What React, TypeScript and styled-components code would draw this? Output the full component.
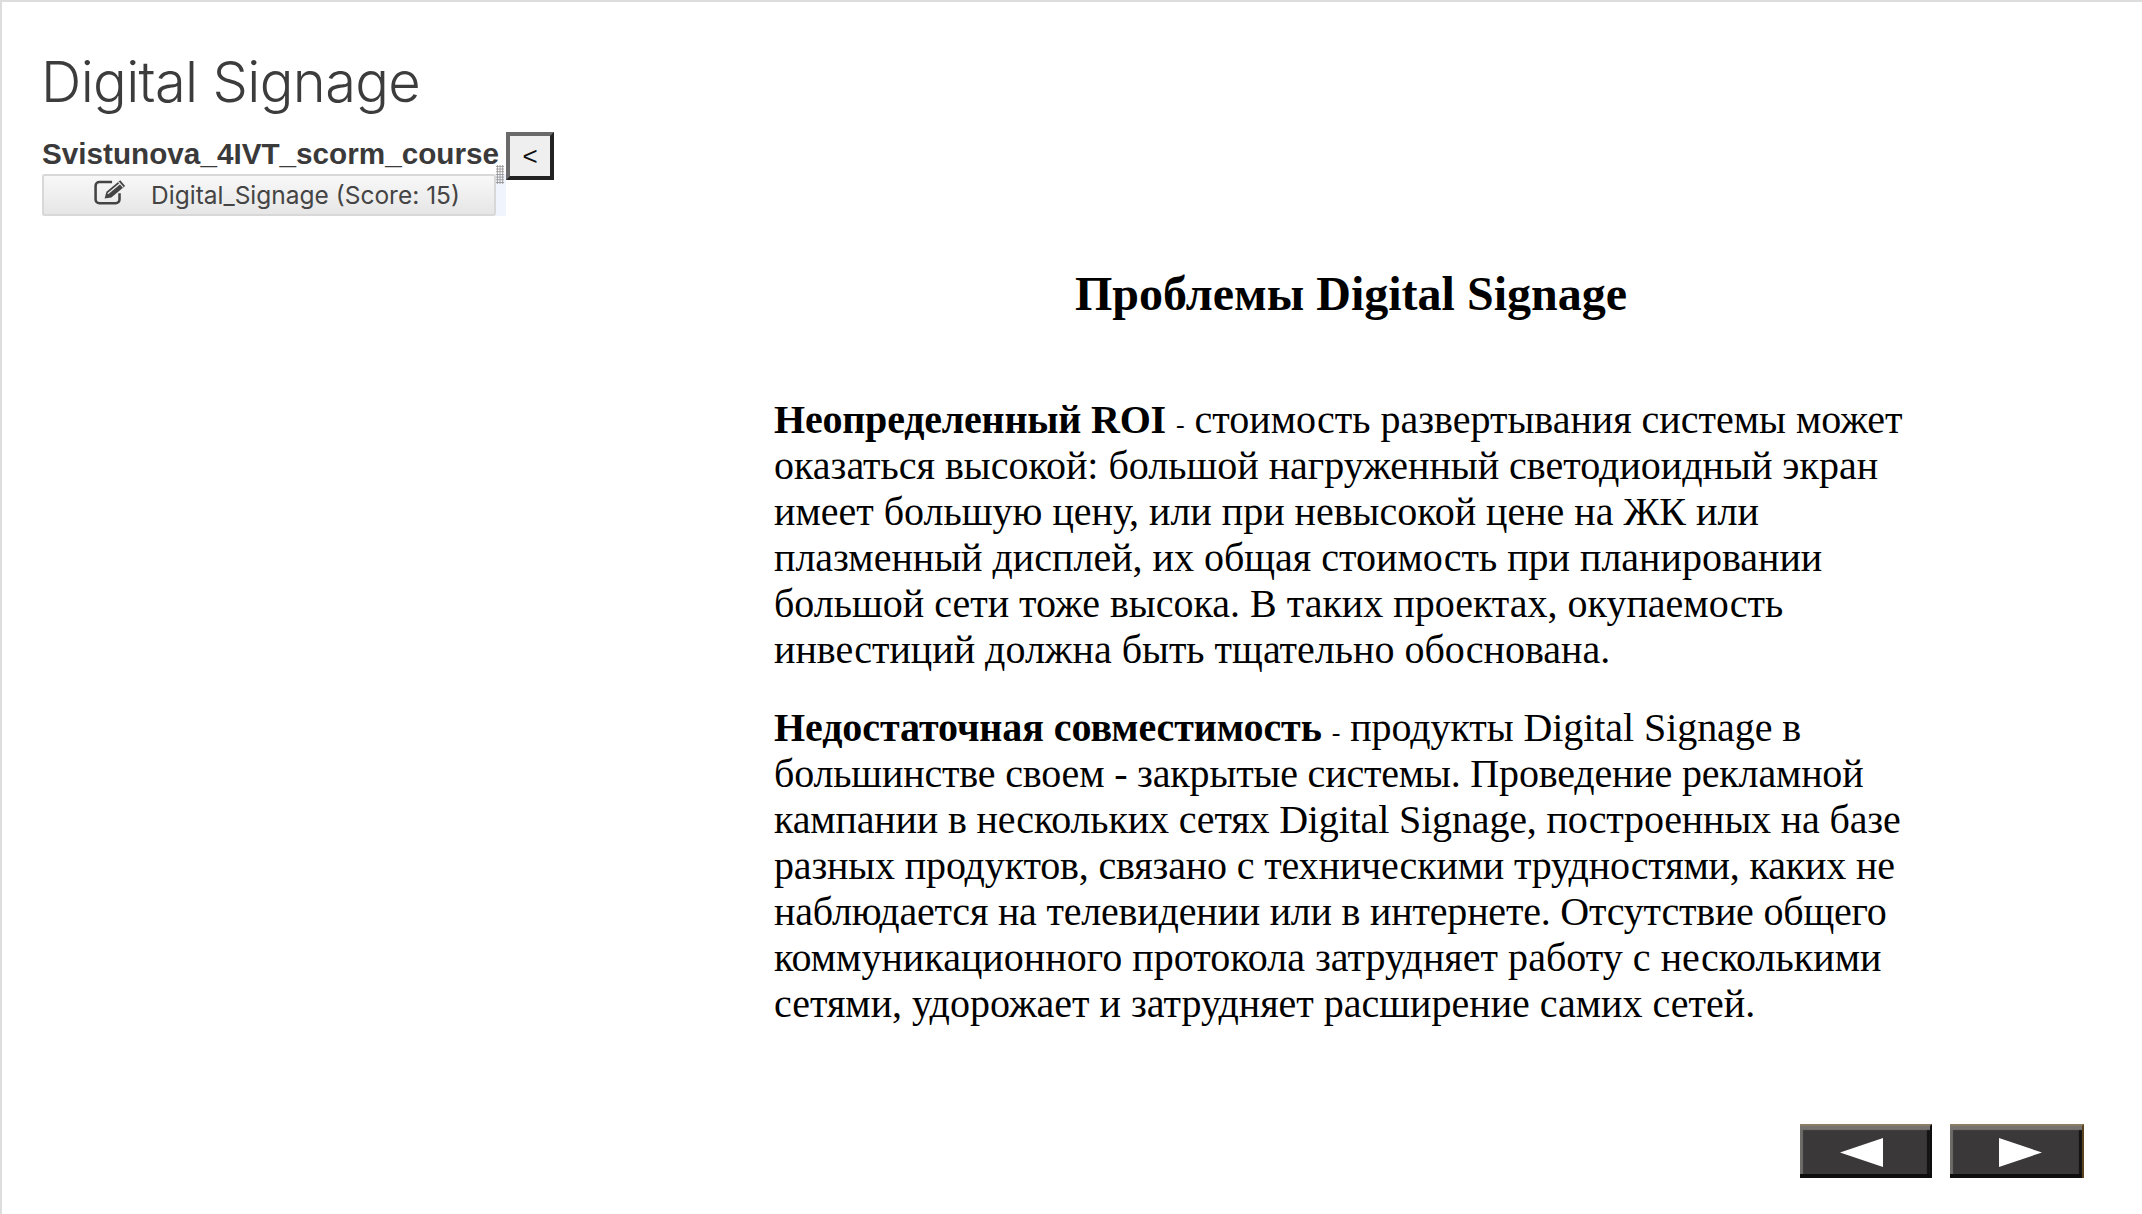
import React from "react";
import styled, { createGlobalStyle } from "styled-components";

const Global = createGlobalStyle`
  html, body { margin: 0; padding: 0; background: #fff; }
  * { box-sizing: border-box; }
`;

const Page = styled.div`
  width: 2142px;
  height: 1214px;
  overflow: hidden;
  display: flex;
  flex-direction: column;
  border-top: 2px solid #ddd;
  border-left: 2px solid #ddd;
  background: #fff;
`;

const Title = styled.h1`
  margin: 46px 0 0 39px;
  height: 68px;
  font: 300 56px/68px Inter, "Liberation Sans", sans-serif;
  letter-spacing: -0.65px;
  color: #3c3c3c;
`;

const Main = styled.div`
  flex: 1;
  display: flex;
  min-height: 0;
`;

const Sidebar = styled.aside`
  width: 512px;
  flex: none;
  padding: 16px 0 0 40px;
`;

const CourseRow = styled.div`
  display: flex;
  align-items: flex-start;
  gap: 8px;
  width: 520px;
`;

const CourseName = styled.div`
  width: 456px;
  flex: none;
  font: 700 29.7px/34px "Liberation Sans", sans-serif;
  color: #3a3a3a;
  white-space: nowrap;
  margin-top: 5px;
`;

const Collapse = styled.div`
  width: 48px;
  height: 48px;
  flex: none;
  display: flex;
  align-items: center;
  justify-content: center;
  background: #efefef;
  border: 4px solid;
  border-color: #6a6a6a #222 #222 #6a6a6a;
  font: 400 26px/1 "Liberation Sans", sans-serif;
  color: #111;
`;

const LessonRow = styled.div`
  position: relative;
  width: 464px;
  margin-top: -6px;
  background: #f0f4fc;
`;

const LessonButton = styled.div`
  width: 454px;
  height: 42px;
  padding-left: 16px;
  display: flex;
  align-items: center;
  justify-content: center;
  gap: 23px;
  border: 2px solid #d8d8d8;
  border-radius: 3px;
  background: linear-gradient(#f8f8f8, #e6e6e6);
  font: 400 24.500px/1 Inter, "Liberation Sans", sans-serif;
  color: #444;
`;

const IconSlot = styled.span`
  display: flex;
  margin-top: -9px;
`;

const Grip = styled.div`
  position: absolute;
  right: 2px;
  top: -9px;
  width: 8px;
  height: 19px;
  background-image: radial-gradient(circle, #999 1.1px, transparent 1.2px);
  background-size: 2.7px 2.7px;
`;

const Content = styled.main`
  flex: 1;
  padding: 0 0 0 260px;
  min-width: 0;
`;

const Article = styled.article`
  width: 1154px;
  font-family: "Liberation Serif", "Times New Roman", serif;
  color: #000;
`;

const Heading = styled.h2`
  margin: 151px 0 76px;
  text-align: center;
  font-size: 48px;
  line-height: 54px;
  font-weight: 700;
`;

const Para = styled.p`
  margin: 0 0 32px;
  font-size: 40px;
  line-height: 46px;
  white-space: nowrap;
`;

const Line = styled.span<{ $squeeze?: number }>`
  letter-spacing: ${(p) => p.$squeeze ?? 0}px;
`;

const Small = styled.span`
  font-size: 26px;
  line-height: 0;
`;

const Footer = styled.div`
  display: flex;
  justify-content: flex-end;
  gap: 18px;
  padding: 0 58px 36px 0;
`;

const NavButton = styled.div<{ $w: number; $side: "left" | "right" }>`
  width: ${(p) => p.$w}px;
  height: 54px;
  display: flex;
  align-items: center;
  justify-content: center;
  ${(p) => (p.$side === "left" ? "padding-right: 8px;" : "padding-left: 8px;")}
  background: #3a3839;
  border-top: 2px solid #8c7d65;
  border-right: 2px solid ${(p) => (p.$side === "left" ? "#0d0d0d" : "#5c431f")};
  box-shadow:
    inset 0 -4px 0 #0e0e0e,
    inset 0 4px 1px #777370,
    inset 3px 0 1px #6e6c68,
    inset -3px 0 1px #111;
`;

const Arrow = ({ dir }: { dir: "left" | "right" }) => (
  <svg width="43" height="29" viewBox="0 0 43 29">
    <polygon points={dir === "left" ? "0,14.500 43,0 43,29" : "0,0 43,14.500 0,29"} fill="#fff" />
  </svg>
);

const EditIcon = () => (
  <svg width="34" height="28" viewBox="0 0 32 26" fill="none">
    <path d="M24 15v6a3.500 3.500 0 0 1-3.500 3.500H5A3.500 3.500 0 0 1 1.500 21V8A3.500 3.500 0 0 1 5 4.500h12" stroke="#444" strokeWidth="2.400" />
    <path d="M10 20l1.700-6.200L24.700 2.800l4.600 5.400-13 11z" fill="#444" />
    <path d="M13 15.500L24.500 6" stroke="#eee" strokeWidth="1.200" />
    <path d="M23 4.500l4.500 5" stroke="#eee" strokeWidth="1" />
  </svg>
);

export default function App() {
  return (
    <Page>
      <Global />
      <Title>Digital Signage</Title>
      <Main>
        <Sidebar>
          <CourseRow>
            <CourseName>Svistunova_4IVT_scorm_course</CourseName>
            <Collapse>&lt;</Collapse>
          </CourseRow>
          <LessonRow>
            <LessonButton>
              <IconSlot><EditIcon /></IconSlot>
              <span>Digital_Signage (Score: 15)</span>
            </LessonButton>
            <Grip />
          </LessonRow>
        </Sidebar>
        <Content>
          <Article>
            <Heading>Проблемы Digital Signage</Heading>
            <Para>
              <Line $squeeze={-0.2}><b>Неопределенный ROI</b></Line> <Small>-</Small> стоимость развертывания системы может<br />
              оказаться высокой: большой нагруженный светодиоидный экран<br />
              имеет большую цену, или при невысокой цене на ЖК или<br />
              плазменный дисплей, их общая стоимость при планировании<br />
              большой сети тоже высока. В таких проектах, окупаемость<br />
              инвестиций должна быть тщательно обоснована.
            </Para>
            <Para>
              <Line $squeeze={-0.07}><b>Недостаточная совместимость</b> <Small>-</Small> продукты Digital Signage в</Line><br />
              <Line $squeeze={-0.17}>большинстве своем - закрытые системы. Проведение рекламной</Line><br />
              <Line $squeeze={-0.15}>кампании в нескольких сетях Digital Signage, построенных на базе</Line><br />
              <Line $squeeze={-0.15}>разных продуктов, связано с техническими трудностями, каких не</Line><br />
              <Line $squeeze={-0.2}>наблюдается на телевидении или в интернете. Отсутствие общего</Line><br />
              <Line $squeeze={0.03}>коммуникационного протокола затрудняет работу с несколькими</Line><br />
              сетями, удорожает и затрудняет расширение самих сетей.
            </Para>
          </Article>
        </Content>
      </Main>
      <Footer>
        <NavButton $w={132} $side="left"><Arrow dir="left" /></NavButton>
        <NavButton $w={134} $side="right"><Arrow dir="right" /></NavButton>
      </Footer>
    </Page>
  );
}
